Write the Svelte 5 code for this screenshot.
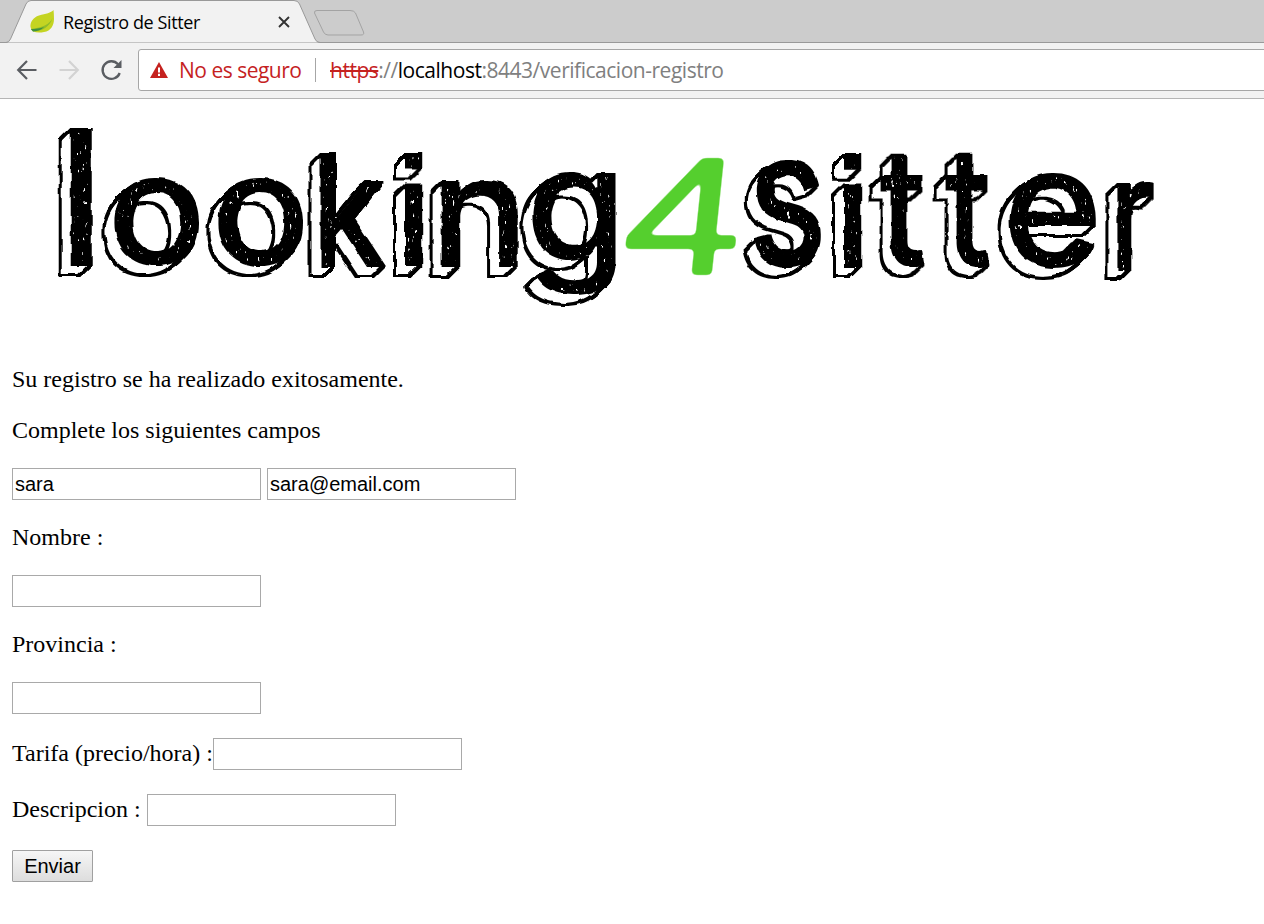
<script>
  // Ink boxes [x0, y0, x1, y1] of each letter's front face in the wordmark.
  const letters = [
    ['l', 70, 130, 91, 266],
    ['o', 114, 179, 199, 266],
    ['o', 218, 179, 303, 266],
    ['k', 320, 154, 385, 267],
    ['i', 405, 154, 422, 266, 'i'],
    ['n', 441, 181, 517, 267],
    ['g', 532, 174, 615, 296],
    ['s', 754, 160, 820, 268],
    ['i', 844, 154, 861, 267, 'i'],
    ['t', 880, 155, 924, 267],
    ['t', 945, 155, 989, 267],
    ['e', 1009, 174, 1095, 268],
    ['r', 1117, 182, 1153, 270]
  ];
  const fonts = {
    sans: '540 160px Inter',
    i: 'bold 160px "Liberation Sans"'
  };
  const ctx = document.createElement('canvas').getContext('2d');

  function fit([ch, x0, y0, x1, y1, kind = 'sans'], font = fonts[kind], skew = 0) {
    ctx.font = font;
    const m = ctx.measureText(ch);
    const sx = (x1 - x0) / (m.actualBoundingBoxRight + m.actualBoundingBoxLeft);
    const sy = (y1 - y0) / (m.actualBoundingBoxAscent + m.actualBoundingBoxDescent);
    const tx = x0 + m.actualBoundingBoxLeft * sx;
    const ty = y0 + m.actualBoundingBoxAscent * sy;
    return { ch, kind, transform: `translate(${tx} ${ty}) skewX(${-skew}) scale(${sx} ${sy})` };
  }

  const glyphs = letters.map((l) => fit(l));
  const four = fit(['4', 623, 159, 732, 274], '400 160px "Liberation Sans"', 6);
</script>

<div class="window">
  <div class="tabs">
    <svg class="tabshape" width="380" height="43" viewBox="0 0 380 43">
      <path d="M0 42.5H6Q9 42.5 10.5 39L26 4Q27.500 .5 31 .5H294Q298 .5 299.500 4L315 39Q316.500 42.500 320 42.500H380" fill="#f2f2f2" stroke="#999" />
      <path d="M317 10.500H350Q354 10.500 355.500 13L363.500 32Q364.500 35 361 35H328Q325 35 323.500 32L314.500 13Q314 10.500 317 10.500Z" fill="#ccc" stroke="#a3a3a3" />
    </svg>
    <div class="tab">
      <svg width="25" height="25" viewBox="0 0 25 25">
        <path d="M23.500 1C21 4 16 4.500 9 6.500C3 8.500 0 13 .5 18Q1 21 3 22Q7 24.500 14 23C21 22 24 16 24 10Q24 5 23.500 1Z" fill="#c4d422" />
        <path d="M22.500 9C20 15 13 18.500 1 20L3 22.500C12 22 20 18 22.500 9Z" fill="#8fbc2b" />
        <path d="M14 18C10 19.500 6 20 1 20L3 22.500C8 22 11 21 14 18Z" fill="#3f9140" />
      </svg>
      <span class="title">Registro de Sitter</span>
      <svg class="close" width="12" height="12" viewBox="0 0 12 12"><path d="M1 1L11 11M11 1L1 11" stroke="#333" stroke-width="1.900" /></svg>
    </div>
  </div>
  <div class="toolbar">
    <div class="nav">
      <svg width="20" height="20" viewBox="0 0 20 20"><path d="M19.500 10H1.500M10 1L1.200 10L10 19" fill="none" stroke="#5a5d62" stroke-width="2.200" /></svg>
      <svg width="20" height="20" viewBox="0 0 20 20"><path d="M.5 10H18.500M10 1L18.800 10L10 19" fill="none" stroke="#d3d3d3" stroke-width="2.200" /></svg>
      <svg class="reload" width="22" height="22" viewBox="0 0 22 22"><path d="M18 5.200A8.800 8.800 0 1 0 19.700 14" fill="none" stroke="#5a5d62" stroke-width="2.300" /><path d="M21.500 1V9H13.500Z" fill="#5a5d62" /></svg>
    </div>
    <div class="address">
      <svg width="18" height="16" viewBox="0 0 18 16"><path d="M9 0L18 16H0Z" fill="#c5221f" /><path d="M9 5.500V10.500M9 11.800V14" stroke="#fff" stroke-width="2" /></svg>
      <span class="warn">No es seguro</span>
      <span class="sep"></span>
      <span class="url"><s>https</s>://<b>localhost</b>:8443/verificacion-registro</span>
    </div>
  </div>

  <svg class="logo" width="1264" height="267" viewBox="0 99 1264 267" aria-label="looking4sitter">
    <defs>
      <filter id="sketch" filterUnits="userSpaceOnUse" x="30" y="110" width="1160" height="220" color-interpolation-filters="sRGB">
        <feOffset in="SourceAlpha" dx="-1" dy="1" result="o1" />
        <feMerge result="e1"><feMergeNode in="SourceAlpha" /><feMergeNode in="o1" /></feMerge>
        <feOffset in="e1" dx="-2" dy="2" result="o2" />
        <feMerge result="e2"><feMergeNode in="e1" /><feMergeNode in="o2" /></feMerge>
        <feOffset in="e2" dx="-4" dy="4" result="o3" />
        <feMerge result="e3"><feMergeNode in="e2" /><feMergeNode in="o3" /></feMerge>
        <feOffset in="e3" dx="-4" dy="3" result="o4" />
        <feMerge result="e4"><feMergeNode in="e3" /><feMergeNode in="o4" /></feMerge>
        <feMorphology in="e4" operator="erode" radius="2" result="thin" />
        <feMorphology in="e4" operator="dilate" radius="1" result="wide" />
        <feComposite in="wide" in2="thin" operator="out" result="rim" />
        <feTurbulence type="fractalNoise" baseFrequency="0.4 0.16" numOctaves="2" seed="8" result="grain" />
        <feColorMatrix in="grain" type="matrix" values="0 0 0 0 0  0 0 0 0 0  0 0 0 0 0  12 0 0 0 -8.300" result="flecks" />
        <feMorphology in="SourceAlpha" operator="erode" radius="3" result="core" />
        <feComposite in="flecks" in2="core" operator="in" result="scratches" />
        <feComposite in="SourceAlpha" in2="scratches" operator="out" result="face" />
        <feMerge result="ink"><feMergeNode in="rim" /><feMergeNode in="face" /></feMerge>
        <feTurbulence type="fractalNoise" baseFrequency="0.07" numOctaves="2" seed="3" result="wobble" />
        <feDisplacementMap in="ink" in2="wobble" scale="4" xChannelSelector="R" yChannelSelector="G" />
      </filter>
      <filter id="brush" filterUnits="userSpaceOnUse" x="610" y="140" width="140" height="150" color-interpolation-filters="sRGB">
        <feGaussianBlur stdDeviation="2.500" />
        <feColorMatrix type="matrix" values="0 0 0 0 .333  0 0 0 0 .812  0 0 0 0 .18  0 0 0 5 -2" />
      </filter>
    </defs>
    <g class="letters" filter="url(#sketch)">
      {#each glyphs as g}
        <text class={g.kind} transform={g.transform}>{g.ch}</text>
      {/each}
    </g>
    <g filter="url(#brush)"><text class="four" transform={four.transform}>4</text></g>
  </svg>

  <form>
    <p>Su registro se ha realizado exitosamente.</p>
    <p>Complete los siguientes campos</p>
    <div class="row pair"><input type="text" value="sara" /><input type="text" value="sara@email.com" /></div>
    <p>Nombre :</p>
    <div class="row"><input type="text" /></div>
    <p>Provincia :</p>
    <div class="row"><input type="text" /></div>
    <div class="row"><label for="rate">Tarifa (precio/hora) :</label><input id="rate" type="text" /></div>
    <div class="row pair"><label for="about">Descripcion :</label><input id="about" type="text" /></div>
    <button type="button">Enviar</button>
  </form>
</div>

<style>
  :global(body) { margin: 0; background: #fff; overflow: hidden; }
  .window { width: 1264px; height: 924px; overflow: hidden; background: #fff; color: #000; }
  svg { display: block; flex: none; overflow: visible; }
  .tabs { height: 43px; position: relative; box-sizing: border-box; background: #ccc; border-bottom: 1px solid #999; }
  .tabshape { position: absolute; left: 0; top: 0; }
  .tab { position: relative; display: flex; align-items: center; width: 260px; height: 43px; padding-left: 30px; font: 18px/24px "Open Sans", sans-serif; }
  .title { margin-left: 8px; width: 215px; letter-spacing: -.38px; white-space: nowrap; }
  .toolbar { display: flex; align-items: center; box-sizing: border-box; height: 56px; padding-bottom: 1px; background: #f2f2f2; border-bottom: 1px solid #b5b5b5; }
  .nav { display: flex; align-items: center; gap: 22px; width: 121px; padding-left: 17px; }
  .reload { margin-left: -1px; }
  .address { display: flex; align-items: center; box-sizing: border-box; flex: 1; height: 42px; margin-right: -4px; padding-left: 11px; background: #fff; border: 1px solid #a6a6a6; border-radius: 3px; font: 21px/30px "Open Sans", sans-serif; white-space: nowrap; }
  .warn { width: 136px; margin-left: 11px; color: #c5221f; letter-spacing: -.5px; }
  .sep { width: 1px; height: 24px; margin-right: 14px; background: #a6a6a6; }
  .url { color: #808080; letter-spacing: -.48px; }
  .url s { color: #c5221f; }
  .url b { color: #000; font-weight: 400; }
  .sans { font: 540 160px Inter, sans-serif; }
  .i { font: bold 160px "Liberation Sans", sans-serif; }
  .four { font: 400 160px "Liberation Sans", sans-serif; fill: #55cf2e; stroke: #55cf2e; stroke-width: 2px; stroke-linejoin: round; }
  form { display: flex; flex-direction: column; align-items: flex-start; gap: 24px; padding-left: 12px; font: 24px/27px "Liberation Serif", serif; }
  p { margin: 0; }
  .row { display: flex; align-items: center; height: 32px; }
  .pair { gap: 6px; }
  label { position: relative; top: -1px; }
  input { box-sizing: border-box; width: 249px; height: 32px; margin: 0; padding: 2px; border: 1px solid #a9a9a9; border-radius: 0; background: #fff; color: #000; font: 20px "Liberation Sans", sans-serif; outline: 0; }
  button { box-sizing: border-box; width: 81px; height: 32px; padding: 0; border: 1px solid #a0a0a0; border-radius: 1px; background: linear-gradient(#f6f6f6, #ddd); color: #000; font: 20px "Liberation Sans", sans-serif; }
</style>
